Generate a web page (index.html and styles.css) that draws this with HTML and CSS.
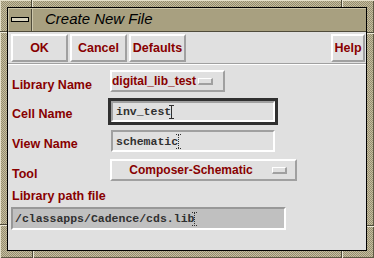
FILE: index.html
```html
<!DOCTYPE html>
<html>
<head>
<meta charset="utf-8">
<link rel="stylesheet" href="styles.css">
</head>
<body>
<div class="frame">
  <span class="notch-v nt1"></span><span class="notch-v nt2"></span>
  <span class="notch-v nb1"></span><span class="notch-v nb2"></span>
  <span class="notch-h nl1"></span><span class="notch-h nl2"></span>
  <span class="notch-h nr1"></span><span class="notch-h nr2"></span>
  <div class="window">
    <div class="titlebar">
      <div class="menu-btn"><span class="bar"></span></div>
      <div class="title">Create New File</div>
    </div>
    <div class="dialog">
      <div class="buttons">
        <div class="btn">OK</div>
        <div class="btn">Cancel</div>
        <div class="btn">Defaults</div>
        <div class="btn help">Help</div>
      </div>
      <div class="sep"></div>
      <div class="form">
        <div class="row row1">
          <div class="lbl lbl-dd">Library Name</div>
          <div class="dd dd-lib"><span class="dd-text">digital_lib_test</span><span class="ind"></span></div>
        </div>
        <div class="row row2">
          <div class="lbl">Cell Name</div>
          <div class="inp inp-focus"><span>inv_test</span><svg class="ibeam" width="5" height="14" viewBox="0 0 5 14"><path d="M0 0.5H5M2.5 0.5V13.5M0 13.5H5" stroke="#303030" stroke-width="1" fill="none"/></svg></div>
        </div>
        <div class="row row3">
          <div class="lbl">View Name</div>
          <div class="inp"><span>schematic</span><svg class="dcur" width="5" height="15" viewBox="0 0 5 15"><path d="M0 0.5H5M2.5 1V14M0 14.5H5" stroke="#303030" stroke-width="1" stroke-dasharray="1 1" fill="none"/></svg></div>
        </div>
        <div class="row row4">
          <div class="lbl lbl-dd">Tool</div>
          <div class="dd dd-tool"><span class="dd-text">Composer-Schematic</span><span class="ind"></span></div>
        </div>
        <div class="lbl lbl-path">Library path file</div>
        <div class="inp path"><span>/classapps/Cadence/cds.lib</span><svg class="dcur" width="5" height="14" viewBox="0 0 5 14"><path d="M0 0.5H5M2.5 1V13M0 13.5H5" stroke="#303030" stroke-width="1" stroke-dasharray="1 1" fill="none"/></svg></div>
      </div>
    </div>
  </div>
</div>
</body>
</html>
```

FILE: styles.css
```css
html, body {
  margin: 0;
  padding: 0;
}
body {
  width: 374px;
  height: 258px;
  overflow: hidden;
  font-family: "Liberation Sans", Arial, sans-serif;
  background: #a8a080;
}
.frame {
  position: relative;
  box-sizing: border-box;
  width: 374px;
  height: 258px;
  padding: 7px;
  background: repeating-conic-gradient(#c6be9f 0 25%, #958d70 0 50%) 0 0 / 2px 2px;
  box-shadow: inset 1px 1px 0 #e4dfc9, inset -1px -1px 0 #5d5843;
}
.notch-v {
  position: absolute;
  width: 1px;
  height: 7px;
  background: #4e4a39;
  box-shadow: 1px 0 0 #ece8d6;
}
.notch-h {
  position: absolute;
  height: 1px;
  width: 7px;
  background: #4e4a39;
  box-shadow: 0 1px 0 #ece8d6;
}
.nt1 { left: 31px; top: 0; }
.nt2 { left: 341px; top: 0; }
.nb1 { left: 32px; bottom: 0; }
.nb2 { left: 341px; bottom: 0; }
.nl1 { left: 0; top: 31px; }
.nl2 { left: 0; top: 224px; }
.nr1 { right: 0; top: 32px; }
.nr2 { right: 0; top: 225px; }

.window {
  box-sizing: border-box;
  height: 244px;
  border: 1px solid #000;
  display: flex;
  flex-direction: column;
  background: #e0e0e0;
}
.titlebar {
  box-sizing: border-box;
  height: 24px;
  display: flex;
  background: #a8a080;
  border-top: 1px solid #cdc7ab;
  border-left: 1px solid #cdc7ab;
  border-bottom: 1px solid #4f4b3a;
}
.menu-btn {
  width: 23px;
  display: flex;
  align-items: center;
  justify-content: center;
  padding-bottom: 2px;
  box-sizing: border-box;
  border-right: 1px solid #4f4b3a;
}
.bar {
  box-sizing: border-box;
  width: 18px;
  height: 5px;
  border: 1px solid #000;
  background: #d8d3bd;
}
.title {
  padding-left: 12px;
  border-left: 1px solid #cdc7ab;
  font-style: italic;
  font-size: 15px;
  line-height: 20px;
  color: #000;
}
.dialog {
  flex: 1;
  background: #e0e0e0;
}
.buttons {
  display: flex;
  gap: 2px;
  padding: 2px 1px 0 3px;
  height: 28px;
}
.btn {
  box-sizing: border-box;
  width: 57px;
  height: 28px;
  border: 2px solid;
  border-color: #fff #a0a0a0 #a0a0a0 #fff;
  background: #e0e0e0;
  color: #880000;
  font-weight: bold;
  font-size: 12.5px;
  display: flex;
  align-items: center;
  justify-content: center;
}
.help {
  margin-left: auto;
  width: 34px;
}
.sep {
  box-sizing: border-box;
  margin-top: 1px;
  height: 2px;
  border-top: 1px solid #a0a0a0;
  border-bottom: 1px solid #fff;
}
.form {
  padding: 5px 0 0 4px;
}
.row {
  display: flex;
  align-items: flex-end;
}
.row2 { margin-top: 9px; }
.row3 { margin-top: 8px; }
.row4 { margin-top: 7px; }
.lbl {
  width: 98px;
  font-size: 12.5px;
  font-weight: bold;
  color: #880000;
  line-height: 15px;
}
.lbl-dd {
  margin-bottom: -1px;
}
.lbl-path {
  margin-top: 8px;
  width: auto;
}
.dd {
  box-sizing: border-box;
  height: 22px;
  border: 2px solid;
  border-color: #fff #a0a0a0 #a0a0a0 #fff;
  display: flex;
  align-items: center;
  gap: 2px;
  color: #880000;
  font-weight: bold;
  font-size: 12px;
  line-height: 14px;
}
.dd-lib {
  width: 115px;
}
.dd-tool {
  width: 187px;
  padding-right: 8px;
}
.dd-tool .dd-text {
  flex: 1;
  text-align: center;
}
.ind {
  flex: none;
  box-sizing: border-box;
  width: 15px;
  height: 7px;
  border-style: solid;
  border-width: 1px 2px 2px 1px;
  border-color: #fff #a0a0a0 #a0a0a0 #fff;
  background: #e0e0e0;
}
.inp {
  box-sizing: border-box;
  width: 164px;
  height: 22px;
  margin-left: 1px;
  border: 2px solid;
  border-color: #a0a0a0 #fff #fff #a0a0a0;
  background: #e0e0e0;
  font-family: "Liberation Mono", "Courier New", monospace;
  font-weight: bold;
  font-size: 11.5px;
  color: #303030;
  display: flex;
  align-items: center;
  padding-left: 3px;
}
.inp-focus {
  height: 21px;
  box-shadow: 0 0 0 3px #303030;
}
.ibeam {
  margin-left: -2px;
}
.dcur {
  margin-left: -2px;
}
.path {
  width: 275px;
  height: 23px;
  margin-top: 3px;
  margin-left: -1px;
  padding-left: 2px;
  background: #c0c0c0;
  border-color: #989898 #fff #fff #989898;
}
```
